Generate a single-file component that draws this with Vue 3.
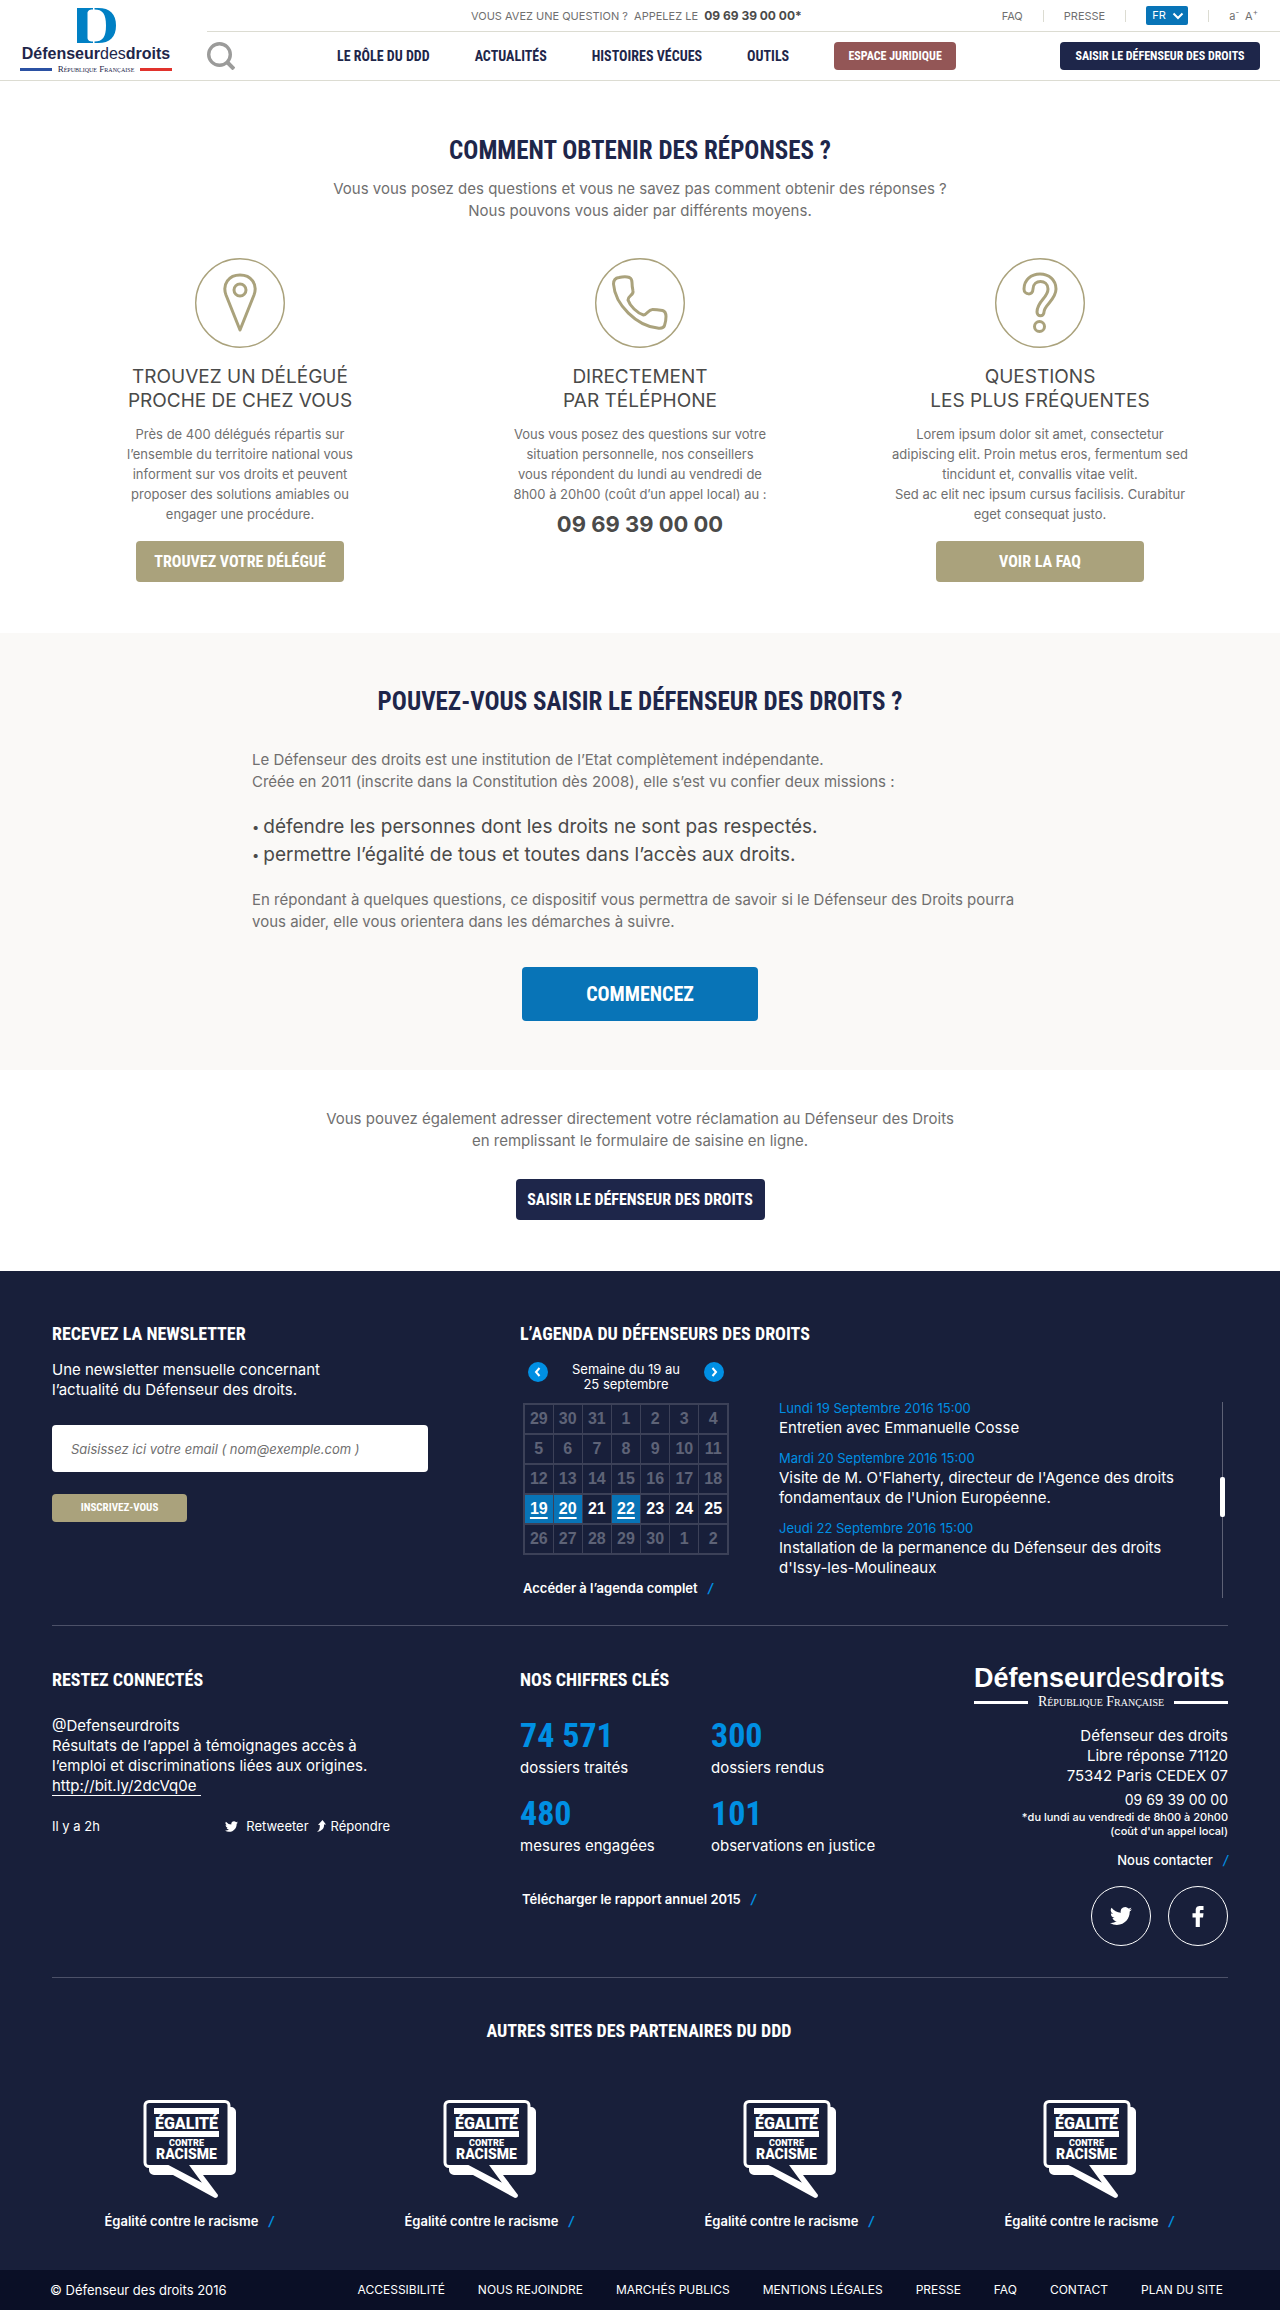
<script setup>
const nav = ['Le rôle du DDD', 'Actualités', 'Histoires vécues', 'Outils']

const weeks = [
  [29, 30, 31, 1, 2, 3, 4],
  [5, 6, 7, 8, 9, 10, 11],
  [12, 13, 14, 15, 16, 17, 18],
  [19, 20, 21, 22, 23, 24, 25],
  [26, 27, 28, 29, 30, 1, 2],
]
const currentWeek = 3
const eventDays = [19, 20, 22]

const events = [
  { date: 'Lundi 19 Septembre 2016 15:00', lines: ['Entretien avec Emmanuelle Cosse'] },
  {
    date: 'Mardi 20 Septembre 2016 15:00',
    lines: ["Visite de M. O'Flaherty, directeur de l'Agence des droits", "fondamentaux de l'Union Européenne."],
  },
  {
    date: 'Jeudi 22 Septembre 2016 15:00',
    lines: ['Installation de la permanence du Défenseur des droits', "d'Issy-les-Moulineaux"],
  },
]

const figures = [
  { value: '74 571', label: 'dossiers traités' },
  { value: '300', label: 'dossiers rendus' },
  { value: '480', label: 'mesures engagées' },
  { value: '101', label: 'observations en justice' },
]

const legal = [
  'Accessibilité', 'Nous rejoindre', 'Marchés publics', 'Mentions légales',
  'Presse', 'FAQ', 'Contact', 'Plan du site',
]

const birdPath =
  'M24 4.600a10 10 0 0 1-2.800.800 5 5 0 0 0 2.100-2.700 10 10 0 0 1-3.100 1.200 4.900 4.900 0 0 0-8.400 4.500A14 14 0 0 1 1.700 3.100a4.900 4.900 0 0 0 1.500 6.600 5 5 0 0 1-2.200-.600v.100a4.900 4.900 0 0 0 3.900 4.800 5 5 0 0 1-2.200.100 4.900 4.900 0 0 0 4.600 3.400A9.900 9.900 0 0 1 0 19.500a14 14 0 0 0 7.500 2.200c9.100 0 14-7.500 14-14v-.600A10 10 0 0 0 24 4.600z'
</script>

<template>
  <div class="page">
    <header class="header">
      <a class="logo" href="#" aria-label="Défenseur des droits">
        <svg class="logo-mark" viewBox="0 0 39 35" aria-hidden="true">
          <path fill="#0080c4" d="M0 0h16v1.500c-4 0-5.500 1.500-5.500 4v24c0 2.500 1.500 4 5.500 4V35H0z" />
          <path fill="#0080c4" d="M17.500 0H21c12 0 18 6 18 17.500S33 35 21 35h-3.500v-1.500c8 0 11.500-4 11.500-16s-3.500-16-11.500-16z" />
        </svg>
        <span class="wordmark"><b>Défenseur</b><span>des</span><b>droits</b></span>
        <span class="motto"><i class="bar blue"></i><span>République Française</span><i class="bar red"></i></span>
      </a>
      <div class="header-main">
        <div class="topbar">
          <p class="hotline">VOUS AVEZ UNE QUESTION ?&nbsp; APPELEZ LE &nbsp;<b>09 69 39 00 00*</b></p>
          <div class="tools">
            <a href="#">FAQ</a>
            <i class="sep"></i>
            <a href="#">PRESSE</a>
            <i class="sep"></i>
            <div class="lang">
              <select aria-label="Langue"><option>FR</option><option>EN</option></select>
              <svg viewBox="0 0 12 8" aria-hidden="true"><path d="M1.500 1.500 6 6l4.500-4.500" fill="none" stroke="#fff" stroke-width="2" /></svg>
            </div>
            <i class="sep"></i>
            <div class="zoom"><button type="button">a<sup>-</sup></button><button type="button">A<sup>+</sup></button></div>
          </div>
        </div>
        <div class="navbar">
          <button class="search" type="button" aria-label="Rechercher">
            <svg viewBox="0 0 28 28" aria-hidden="true">
              <circle cx="12.500" cy="12.500" r="10.800" fill="none" stroke="#9b9b9a" stroke-width="3.400" />
              <path d="M20 20l7 7" stroke="#9b9b9a" stroke-width="4" />
            </svg>
          </button>
          <nav class="nav" aria-label="Navigation principale">
            <a v-for="item in nav" :key="item" class="cond" href="#">{{ item }}</a>
            <a class="cond btn legal-btn" href="#">Espace juridique</a>
          </nav>
          <a class="cond btn file-btn" href="#">Saisir le défenseur des droits</a>
        </div>
      </div>
    </header>

    <main>
      <section class="answers">
        <h1 class="cond headline">Comment obtenir des réponses ?</h1>
        <p class="lead">Vous vous posez des questions et vous ne savez pas comment obtenir des réponses ?<br />Nous pouvons vous aider par différents moyens.</p>
        <div class="ways">
          <article class="way">
            <svg class="way-icon" viewBox="0 0 90 90" aria-hidden="true">
              <circle cx="45" cy="45" r="44.300" />
              <path class="thick" d="M45 72 31 37c-4-11 3-20 14-20s18 9 14 20z" />
              <circle class="thick" cx="45" cy="32" r="6" />
            </svg>
            <h2>TROUVEZ UN DÉLÉGUÉ<br />PROCHE DE CHEZ VOUS</h2>
            <p>Près de 400 délégués répartis sur<br />l’ensemble du territoire national vous<br />informent sur vos droits et peuvent<br />proposer des solutions amiables ou<br />engager une procédure.</p>
            <a class="cond btn sand-btn" href="#">Trouvez votre délégué</a>
          </article>
          <article class="way">
            <svg class="way-icon" viewBox="0 0 90 90" aria-hidden="true">
              <circle cx="45" cy="45" r="44.300" />
              <path class="thick" d="M24 19.500c4-1 8-1 10.500 0 2 1 2.500 2.500 2.500 5 0 3 .5 6 1 8.500 1 4-5 4.500-5 9 2 6 9 13 15.500 15 3.500 0 4.500-5.500 9-5.500 4 0 7 .5 10 1 3 1 3.500 3 3.500 6 0 3.500-.5 6-1.500 9-1 3-4 3-7 2.500C42 68 20 47 18.500 26c0-4 2-6 5.500-6.500z" />
            </svg>
            <h2>DIRECTEMENT<br />PAR TÉLÉPHONE</h2>
            <p>Vous vous posez des questions sur votre<br />situation personnelle, nos conseillers<br />vous répondent du lundi au vendredi de<br />8h00 à 20h00 (coût d’un appel local) au :</p>
            <strong class="phone">09 69 39 00 00</strong>
          </article>
          <article class="way">
            <svg class="way-icon" viewBox="0 0 90 90" aria-hidden="true">
              <circle cx="45" cy="45" r="44.300" />
              <path class="thick" d="M29 31c0-9 7-15 16-15s16 6 16 15c0 11-12 16-12 23 0 5-7 5-7 0 0-11 11-14 11-23 0-10-15-10-15 0 0 7-9 6-9 0z" />
              <circle class="thick" cx="44.500" cy="68.500" r="5" />
            </svg>
            <h2>QUESTIONS<br />LES PLUS FRÉQUENTES</h2>
            <p>Lorem ipsum dolor sit amet, consectetur<br />adipiscing elit. Proin metus eros, fermentum sed<br />tincidunt et, convallis vitae velit.<br />Sed ac elit nec ipsum cursus facilisis. Curabitur<br />eget consequat justo.</p>
            <a class="cond btn sand-btn" href="#">Voir la FAQ</a>
          </article>
        </div>
      </section>

      <section class="eligibility">
        <h2 class="cond headline">Pouvez-vous saisir le défenseur des droits ?</h2>
        <div class="prose">
          <p>Le Défenseur des droits est une institution de l’Etat complètement indépendante.<br />Créée en 2011 (inscrite dans la Constitution dès 2008), elle s’est vu confier deux missions :</p>
          <ul>
            <li>défendre les personnes dont les droits ne sont pas respectés.</li>
            <li>permettre l’égalité de tous et toutes dans l’accès aux droits.</li>
          </ul>
          <p>En répondant à quelques questions, ce dispositif vous permettra de savoir si le Défenseur des Droits pourra vous aider, elle vous orientera dans les démarches à suivre.</p>
        </div>
        <a class="cond btn start-btn" href="#">Commencez</a>
      </section>

      <section class="direct">
        <p class="lead">Vous pouvez également adresser directement votre réclamation au Défenseur des Droits<br />en remplissant le formulaire de saisine en ligne.</p>
        <a class="cond btn direct-btn" href="#">Saisir le défenseur des droits</a>
      </section>
    </main>

    <footer class="footer">
      <div class="row row-top">
        <section class="newsletter">
          <h2 class="cond title">Recevez la newsletter</h2>
          <p class="text">Une newsletter mensuelle concernant<br />l’actualité du Défenseur des droits.</p>
          <form @submit.prevent>
            <input type="email" aria-label="Votre email" placeholder="Saisissez ici votre email ( nom@exemple.com )" />
            <button class="cond btn subscribe" type="submit">Inscrivez-vous</button>
          </form>
        </section>

        <section class="agenda">
          <h2 class="cond title">L’agenda du défenseurs des droits</h2>
          <div class="agenda-body">
            <div class="calendar">
              <div class="week-nav">
                <button type="button" aria-label="Semaine précédente">
                  <svg viewBox="0 0 20 20"><path d="M11.500 6 8 10l3.500 4" fill="none" stroke="#fff" stroke-width="2" /></svg>
                </button>
                <span>Semaine du 19 au<br />25 septembre</span>
                <button type="button" aria-label="Semaine suivante">
                  <svg viewBox="0 0 20 20"><path d="M8.500 6 12 10l-3.500 4" fill="none" stroke="#fff" stroke-width="2" /></svg>
                </button>
              </div>
              <table>
                <tbody>
                  <tr v-for="(week, w) in weeks" :key="w" :class="{ current: w === currentWeek }">
                    <td v-for="day in week" :key="day" :class="{ busy: w === currentWeek && eventDays.includes(day) }">
                      <a v-if="w === currentWeek && eventDays.includes(day)" href="#">{{ day }}</a>
                      <template v-else>{{ day }}</template>
                    </td>
                  </tr>
                </tbody>
              </table>
              <a class="more" href="#">Accéder à l’agenda complet <i>/</i></a>
            </div>
            <div class="events">
              <dl>
                <template v-for="e in events" :key="e.date">
                  <dt>{{ e.date }}</dt>
                  <dd><template v-for="(line, i) in e.lines" :key="i"><br v-if="i" />{{ line }}</template></dd>
                </template>
              </dl>
              <div class="track"><div class="thumb"></div></div>
            </div>
          </div>
        </section>
      </div>

      <div class="row row-middle">
        <section class="social">
          <h2 class="cond title">Restez connectés</h2>
          <p class="text">@Defenseurdroits<br />Résultats de l’appel à témoignages accès à<br />l’emploi et discriminations liées aux origines.<br /><a href="#">http://bit.ly/2dcVq0e&nbsp;</a></p>
          <div class="tweet-meta">
            <span>Il y a 2h</span>
            <div class="tweet-actions">
              <a href="#"><svg class="bird" viewBox="0 0 24 24"><path :d="birdPath" fill="#fff" /></svg>Retweeter</a>
              <a href="#"><svg class="reply" viewBox="0 0 9 12"><path d="M5.500 0 9 4.500H7C7.500 8 5 11 0 12c2.500-2 3-4 2.800-7H1z" fill="#fff" /></svg>Répondre</a>
            </div>
          </div>
        </section>

        <section class="key-figures">
          <h2 class="cond title">Nos chiffres clés</h2>
          <div class="figures">
            <div v-for="f in figures" :key="f.value" class="figure">
              <strong class="cond">{{ f.value }}</strong>
              <span>{{ f.label }}</span>
            </div>
          </div>
          <a class="more" href="#">Télécharger le rapport annuel 2015 <i>/</i></a>
        </section>

        <section class="contact">
          <div class="logo-white">
            <span class="wordmark"><b>Défenseur</b><span>des</span><b>droits</b></span>
            <span class="motto"><i class="bar"></i><span>République Française</span><i class="bar"></i></span>
          </div>
          <address>
            <p>Défenseur des droits<br />Libre réponse 71120<br />75342 Paris CEDEX 07</p>
            <p class="tel">09 69 39 00 00</p>
            <p class="hours">*du lundi au vendredi de 8h00 à 20h00<br />(coût d'un appel local)</p>
          </address>
          <a class="more" href="#">Nous contacter <i>/</i></a>
          <div class="networks">
            <a href="#" aria-label="Twitter"><svg viewBox="0 0 24 24"><path :d="birdPath" fill="#fff" /></svg></a>
            <a href="#" aria-label="Facebook"><svg viewBox="0 0 24 24"><path d="M9.500 24V13.500H6V9h3.500V5.500C9.500 2 11.500 1 14.500 1H18v4.500h-2.200c-1.300 0-1.800.500-1.800 1.700V9h4l-.500 4.500H14V24z" fill="#fff" /></svg></a>
          </div>
        </section>
      </div>

      <section class="partners">
        <h2 class="cond title">Autres sites des partenaires du DDD</h2>
        <div class="partner-list">
          <a v-for="n in 4" :key="n" class="partner" href="#">
            <svg viewBox="0 0 93 98" width="93" height="98" aria-hidden="true">
              <path fill="#fff" d="M11 7h77a5 5 0 0 1 5 5v58a5 5 0 0 1-5 5H60l15 20q0 3-3 3L30 75H11a5 5 0 0 1-5-5V12a5 5 0 0 1 5-5z" />
              <path fill="#181f3a" stroke="#fff" stroke-width="3" d="M6 1.500h76a4 4 0 0 1 4 4v57a4 4 0 0 1-4 4H49L64 87 25 66.500H6a4 4 0 0 1-4-4v-57a4 4 0 0 1 4-4z" />
              <path fill="#fff" d="M11 8h65v6H11zM11 31h65v6H11z" />
              <g fill="#fff" text-anchor="middle" font-family="Roboto, sans-serif" font-weight="900">
                <text x="43.500" y="29" font-size="16">ÉGALITÉ</text>
                <text x="43.500" y="46" font-size="9">CONTRE</text>
                <text x="43.500" y="59" font-size="14">RACISME</text>
              </g>
            </svg>
            <span class="more">Égalité contre le racisme <i>/</i></span>
          </a>
        </div>
      </section>

      <div class="bottom">
        <span>© Défenseur des droits 2016</span>
        <nav aria-label="Liens légaux">
          <a v-for="l in legal" :key="l" href="#">{{ l }}</a>
        </nav>
      </div>
    </footer>
  </div>
</template>

<style>
body {
  margin: 0;
}
</style>

<style scoped>
.page {
  font-family: Inter, "Liberation Sans", sans-serif;
  font-size: 15px;
  line-height: 20px;
  color: #706f6f;
  background: #fff;
}
.page * {
  box-sizing: border-box;
}
h1, h2, p, ul, dl, dd {
  margin: 0;
  padding: 0;
}
a {
  color: inherit;
  text-decoration: none;
}
button {
  padding: 0;
  border: 0;
  background: none;
  color: inherit;
  font: inherit;
  cursor: pointer;
}
svg {
  display: block;
}
.cond {
  font-family: "Roboto Condensed", "Liberation Sans Narrow", sans-serif;
  font-weight: 700;
  text-transform: uppercase;
}
.btn {
  display: flex;
  align-items: center;
  justify-content: center;
  border-radius: 4px;
  color: #fff;
  white-space: nowrap;
}

/* Header */
.header {
  display: flex;
  border-bottom: 1px solid #dcdcd2;
}
.logo {
  display: flex;
  flex-direction: column;
  align-items: center;
  width: 152px;
  margin: 8px 35px 0 20px;
  color: #1e264a;
}
.logo-mark {
  width: 39px;
  height: 35px;
}
.wordmark {
  display: flex;
  font-family: "Liberation Sans", sans-serif;
  font-size: 16px;
  line-height: 22px;
}
.motto {
  display: flex;
  align-items: center;
  justify-content: space-between;
  width: 100%;
  font-family: "Liberation Serif", serif;
  font-size: 9px;
  font-variant: small-caps;
  line-height: 8px;
  white-space: nowrap;
}
.bar {
  width: 32px;
  height: 3px;
  background: #fff;
}
.blue {
  background: #2b51a3;
}
.red {
  background: #e1332d;
}
.header-main {
  flex: 1;
}
.topbar {
  display: flex;
  align-items: center;
  justify-content: space-between;
  height: 32px;
  padding: 0 22px 0 264px;
  border-bottom: 1px solid #dcdcd2;
  font-size: 11px;
}
.hotline b {
  font-size: 12px;
  color: #4a4a49;
}
.tools {
  display: flex;
  align-items: center;
  gap: 20px;
}
.sep {
  width: 1px;
  height: 12px;
  background: #dcdcd2;
}
.lang {
  position: relative;
}
.lang select {
  display: block;
  width: 42px;
  height: 19px;
  padding: 0 6px;
  border: 0;
  border-radius: 2px;
  background: #0874b7;
  color: #fff;
  font: inherit;
  line-height: 19px;
  appearance: none;
}
.lang svg {
  position: absolute;
  top: 6px;
  right: 4px;
  width: 12px;
  height: 8px;
  pointer-events: none;
}
.zoom {
  display: flex;
  gap: 6px;
}
sup {
  font-size: 8px;
  line-height: 0;
}
.navbar {
  display: flex;
  align-items: center;
  height: 48px;
  padding-right: 20px;
  font-size: 14px;
  color: #1e264a;
}
.search {
  width: 28px;
  height: 28px;
}
.nav {
  display: flex;
  align-items: center;
  gap: 45px;
  margin-left: 102px;
}
.legal-btn {
  width: 122px;
  height: 28px;
  background: #935656;
  font-size: 12px;
}
.file-btn {
  width: 200px;
  height: 28px;
  margin-left: auto;
  background: #1e264a;
  font-size: 12px;
}

/* Sections */
.headline {
  font-size: 25px;
  line-height: 40px;
  color: #1e264a;
  text-align: center;
}
.lead {
  line-height: 22px;
  text-align: center;
}
.answers {
  padding: 50px 40px 51px;
}
.answers .lead {
  margin-top: 7px;
}
.ways {
  display: grid;
  grid-template-columns: repeat(3, 1fr);
  margin-top: 36px;
}
.way {
  display: flex;
  flex-direction: column;
  align-items: center;
  text-align: center;
}
.way-icon {
  width: 90px;
  height: 90px;
  fill: none;
  stroke: #aaa27c;
  stroke-width: 1.400;
}
.thick {
  stroke-width: 3;
  stroke-linejoin: round;
}
.way h2 {
  margin: 17px 0 11px;
  font-size: 19px;
  font-weight: 400;
  line-height: 24px;
  color: #4a4a49;
}
.way p {
  font-size: 13px;
}
.sand-btn {
  width: 208px;
  height: 41px;
  margin-top: 17px;
  background: #aaa27c;
  font-size: 16px;
}
.phone {
  margin-top: 10px;
  font-size: 22px;
  color: #4a4a49;
}
.eligibility {
  padding: 49px 20px;
  background: #faf9f7;
}
.prose {
  max-width: 776px;
  margin: 27px auto 34px;
  line-height: 22px;
}
.prose ul {
  margin: 20px 0;
  font-size: 19px;
  line-height: 28px;
  color: #4a4a49;
  list-style: none;
}
.prose li {
  display: flex;
  gap: 4px;
}
.prose li::before {
  content: "•";
  font-size: 13px;
}
.start-btn {
  width: 236px;
  height: 54px;
  margin: 0 auto;
  background: #0874b7;
  font-size: 20px;
}
.direct {
  padding: 38px 20px 51px;
}
.direct-btn {
  width: 249px;
  height: 41px;
  margin: 27px auto 0;
  background: #1e264a;
  font-size: 16px;
}

/* Footer */
.footer {
  background: #181f3a;
  color: #fff;
}
.title {
  font-size: 18px;
  line-height: 24px;
}
.row {
  display: flex;
  margin: 0 52px;
  border-bottom: 1px solid #4c5168;
}
.row-top {
  padding: 51px 0 27px;
}
.newsletter, .social {
  width: 468px;
  flex-shrink: 0;
}
.newsletter .text {
  margin-top: 14px;
}
input {
  display: block;
  width: 376px;
  height: 47px;
  margin: 25px 0 22px;
  padding: 0 19px;
  border: 0;
  border-radius: 4px;
  background: #fff;
  color: #706f6f;
  font: italic 13px Inter, sans-serif;
}
input::placeholder {
  color: #706f6f;
  opacity: 1;
}
.subscribe {
  width: 135px;
  height: 28px;
  background: #aaa27c;
  font-family: "Roboto Condensed", "Liberation Sans Narrow", sans-serif;
  font-size: 11px;
  font-weight: 700;
}
.agenda {
  flex: 1;
}
.agenda-body {
  display: flex;
  gap: 50px;
  margin-top: 14px;
}
.calendar {
  width: 206px;
  margin-left: 3px;
}
.week-nav {
  display: flex;
  align-items: flex-start;
  justify-content: space-between;
  padding: 2px 5px 0;
  font-size: 13px;
  line-height: 15px;
  text-align: center;
}
.week-nav button {
  width: 20px;
  height: 20px;
  border-radius: 50%;
  background: #008fe3;
}
table {
  width: 206px;
  margin-top: 11px;
  border: 2px solid #3c4158;
  border-collapse: collapse;
  font: 700 16px "Liberation Sans", sans-serif;
  color: #5e6377;
}
td {
  width: 29px;
  height: 30px;
  padding: 0;
  border: solid #3c4158;
  border-width: 2px 1px;
  text-align: center;
}
.current {
  color: #fff;
}
.busy {
  background: #0874b7;
}
td a {
  text-decoration: underline 2px;
  text-underline-offset: 3px;
}
.more {
  font-size: 13px;
  font-weight: 600;
  white-space: nowrap;
}
.more i {
  margin-left: 7px;
  color: #008fe3;
}
.calendar .more {
  display: block;
  margin-top: 23px;
}
.events {
  display: flex;
  flex: 1;
  justify-content: space-between;
  margin-top: 38px;
}
dt {
  font-size: 13px;
  color: #008fe3;
}
dd {
  margin-bottom: 10px;
}
.track {
  width: 5px;
  margin: 4px 3px 0 0;
  padding-top: 75px;
  background: linear-gradient(#5d6175, #5d6175) center / 1px 100% no-repeat;
}
.thumb {
  width: 5px;
  height: 40px;
  border-radius: 2px;
  background: #fff;
}
.row-middle {
  padding: 36px 0 31px;
}
.social, .key-figures {
  padding-top: 6px;
}
.social .text {
  margin-top: 24px;
}
.text a {
  border-bottom: 1px solid #fff;
}
.tweet-meta {
  display: flex;
  justify-content: space-between;
  width: 338px;
  margin-top: 20px;
  font-size: 13px;
}
.tweet-actions, .tweet-actions a {
  display: flex;
  align-items: center;
  gap: 8px;
}
.bird {
  width: 13px;
  height: 13px;
}
.reply {
  width: 9px;
  height: 12px;
  margin-right: -3px;
}
.key-figures {
  flex: 1;
}
.figures {
  display: grid;
  grid-template-columns: 191px auto;
  row-gap: 16px;
  margin: 24px 0 33px;
}
.figure {
  display: flex;
  flex-direction: column;
  gap: 4px;
}
.figure strong {
  font-size: 34px;
  line-height: 38px;
  color: #008fe3;
}
.key-figures .more {
  margin-left: 2px;
}
.contact {
  width: 254px;
  text-align: right;
}
.logo-white .wordmark {
  font-size: 27px;
  line-height: 32px;
}
.logo-white .motto {
  margin-top: 1px;
  font-size: 14px;
  line-height: 14px;
}
.logo-white .bar {
  width: 54px;
}
address {
  margin: 17px 0 12px;
  font-style: normal;
}
.tel {
  margin-top: 4px;
  font-size: 14px;
}
.hours {
  font-size: 11px;
  font-weight: 500;
  line-height: 14px;
}
.contact .more {
  font-weight: 500;
}
.networks {
  display: flex;
  justify-content: flex-end;
  gap: 17px;
  margin-top: 16px;
}
.networks a {
  display: flex;
  align-items: center;
  justify-content: center;
  width: 60px;
  height: 60px;
  border: 1px solid #fff;
  border-radius: 50%;
}
.networks svg {
  width: 22px;
  height: 22px;
}
.partners {
  padding: 41px 41px 39px 39px;
  text-align: center;
}
.partner-list {
  display: grid;
  grid-template-columns: repeat(4, 1fr);
  margin-top: 57px;
}
.partner {
  display: flex;
  flex-direction: column;
  align-items: center;
  gap: 13px;
}
.bottom {
  display: flex;
  align-items: center;
  justify-content: space-between;
  min-height: 40px;
  padding: 0 57px 0 50px;
  background: #0a0f26;
  font-size: 13px;
}
.bottom nav {
  display: flex;
  gap: 33px;
  font-size: 12px;
  text-transform: uppercase;
}
</style>
